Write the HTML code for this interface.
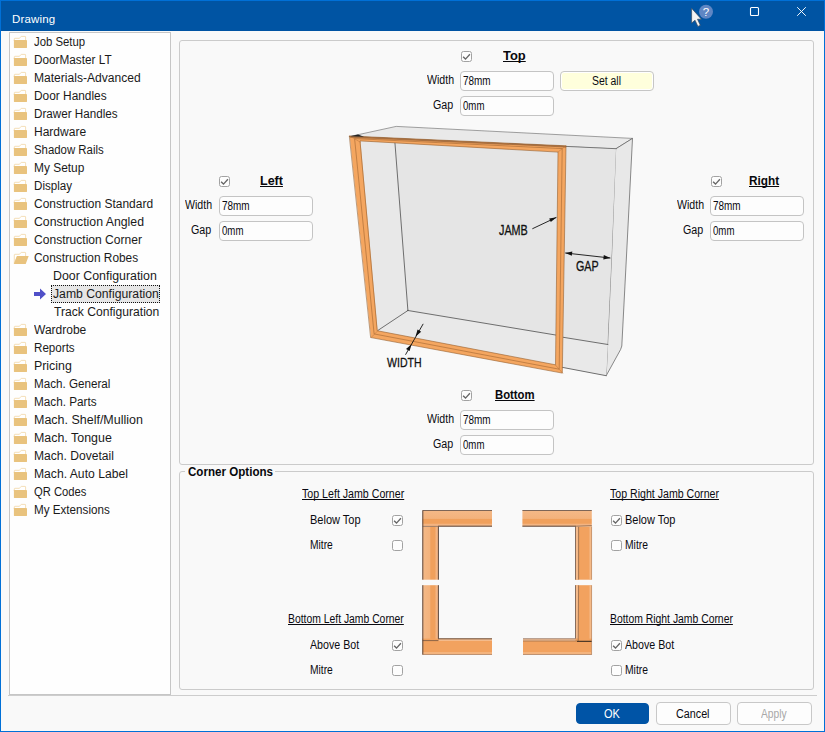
<!DOCTYPE html>
<html><head><meta charset="utf-8"><title>Drawing</title>
<style>
html,body{margin:0;padding:0;}
body{width:825px;height:732px;overflow:hidden;background:#f9f9f9;font-family:"Liberation Sans",sans-serif;font-size:11px;color:#1a1a1a;position:relative;}
.abs{position:absolute;}
#win{position:absolute;left:0;top:0;width:823px;height:730px;border:1px solid #0070d7;background:#f9f9f9;}
#title{position:absolute;left:1px;top:1px;width:823px;height:30px;background:#0054a3;box-sizing:border-box;}
#title .t{position:absolute;left:11px;top:11px;color:#fff;font-size:11.5px;line-height:14px;letter-spacing:.15px;}
#tree{position:absolute;left:9px;top:32px;width:160px;height:661px;border:1px solid #c6c6c6;background:#fefefe;}
.tr{position:absolute;left:0;width:170px;height:18px;}
.tr .fi{position:absolute;left:13px;top:2px;}
.tr .ar{position:absolute;left:33px;top:0px;}
.tt{position:absolute;top:2px;font-size:12px;line-height:14px;white-space:nowrap;color:#1a1a1a;display:inline-block;transform-origin:0 50%;}
.selbox{position:absolute;left:51px;top:0px;width:109px;height:18px;box-sizing:border-box;background:#e6e6e6;border:1px dotted #111;}
.grp{position:absolute;border:1px solid #cbcbcb;border-radius:3px;box-sizing:border-box;}
.lbl{position:absolute;font-size:11px;line-height:13px;white-space:nowrap;color:#1a1a1a;}
.hd{position:absolute;font-size:11px;line-height:13px;font-weight:bold;text-decoration:underline;white-space:nowrap;color:#111;}
.tx{position:absolute;white-space:nowrap;transform-origin:0 50%;color:#0a0a10;display:inline-block;}
.tb{font-weight:bold;color:#08080c;}
.tu{text-decoration:underline;text-decoration-skip-ink:none;text-underline-offset:1px;text-decoration-thickness:1px;}
.tw{color:#fff;}
.tg{color:#a8a8a8;}
.inp{position:absolute;width:94px;height:20px;box-sizing:border-box;border:1px solid #c4c4c4;border-radius:4px;background:#fdfdfd;font-size:11px;line-height:18px;padding-left:3px;color:#1a1a1a;}
.cb{position:absolute;width:11px;height:11px;box-sizing:border-box;border:1px solid #a2a2a2;border-radius:2.5px;background:#fdfdfd;}
.cb svg{position:absolute;left:-1px;top:-1px;}
.btn{position:absolute;height:22px;box-sizing:border-box;border:1px solid #c8c8c8;border-radius:4px;background:#fdfdfd;font-size:11.5px;line-height:20px;text-align:center;color:#1a1a1a;}
</style></head><body>
<div id="win"></div>
<div id="title"><span class="t">Drawing</span>
<svg class="abs" style="left:687px;top:3px" width="28" height="24" viewBox="0 0 28 24">
<circle cx="18" cy="7.7" r="7" fill="#5f86c4"/>
<text x="18" y="11.8" font-size="11.5" text-anchor="middle" fill="#fff" font-family="Liberation Sans">?</text>
<path d="M3.6 4.3 L3.6 19.1 L7 16.2 L9.9 22.4 L12.3 21.3 L9.5 15.2 L13.4 15.2 Z" fill="#f4f4f4" stroke="#3a4a60" stroke-width=".7"/>
</svg>
<svg class="abs" style="left:748px;top:5px" width="12" height="12" viewBox="0 0 12 12"><rect x="1.5" y="1.5" width="8" height="8" rx="1" fill="none" stroke="#fff" stroke-width="1.1"/></svg>
<svg class="abs" style="left:795px;top:5px" width="12" height="12" viewBox="0 0 12 12"><path d="M1.2 1.2 L9.8 9.8 M9.8 1.2 L1.2 9.8" stroke="#fff" stroke-width=".95" fill="none"/></svg>
</div>
<div id="tree"></div>
<div class="tr" style="top:33px"><svg class="fi" width="17" height="15" viewBox="0 0 17 15"><path d="M1.3 6 L1.3 3.8 Q1.3 3.3 1.8 3.3 L6.5 3.3 L7.9 1.6 Q8.1 1.4 8.5 1.4 L12.1 1.4 Q12.6 1.4 12.6 1.9 L12.6 6 Z" fill="#fff" stroke="#f1d7a6" stroke-width=".8"/><rect x="0.9" y="5.1" width="13.1" height="7.8" rx=".4" fill="#e9c37e"/></svg><span class="tt" style="left:33.96px;transform:scaleX(0.946)">Job Setup</span></div>
<div class="tr" style="top:51px"><svg class="fi" width="17" height="15" viewBox="0 0 17 15"><path d="M1.3 6 L1.3 3.8 Q1.3 3.3 1.8 3.3 L6.5 3.3 L7.9 1.6 Q8.1 1.4 8.5 1.4 L12.1 1.4 Q12.6 1.4 12.6 1.9 L12.6 6 Z" fill="#fff" stroke="#f1d7a6" stroke-width=".8"/><rect x="0.9" y="5.1" width="13.1" height="7.8" rx=".4" fill="#e9c37e"/></svg><span class="tt" style="left:33.62px;transform:scaleX(0.981)">DoorMaster LT</span></div>
<div class="tr" style="top:69px"><svg class="fi" width="17" height="15" viewBox="0 0 17 15"><path d="M1.3 6 L1.3 3.8 Q1.3 3.3 1.8 3.3 L6.5 3.3 L7.9 1.6 Q8.1 1.4 8.5 1.4 L12.1 1.4 Q12.6 1.4 12.6 1.9 L12.6 6 Z" fill="#fff" stroke="#f1d7a6" stroke-width=".8"/><rect x="0.9" y="5.1" width="13.1" height="7.8" rx=".4" fill="#e9c37e"/></svg><span class="tt" style="left:33.59px;transform:scaleX(1.006)">Materials-Advanced</span></div>
<div class="tr" style="top:87px"><svg class="fi" width="17" height="15" viewBox="0 0 17 15"><path d="M1.3 6 L1.3 3.8 Q1.3 3.3 1.8 3.3 L6.5 3.3 L7.9 1.6 Q8.1 1.4 8.5 1.4 L12.1 1.4 Q12.6 1.4 12.6 1.9 L12.6 6 Z" fill="#fff" stroke="#f1d7a6" stroke-width=".8"/><rect x="0.9" y="5.1" width="13.1" height="7.8" rx=".4" fill="#e9c37e"/></svg><span class="tt" style="left:33.61px;transform:scaleX(0.990)">Door Handles</span></div>
<div class="tr" style="top:105px"><svg class="fi" width="17" height="15" viewBox="0 0 17 15"><path d="M1.3 6 L1.3 3.8 Q1.3 3.3 1.8 3.3 L6.5 3.3 L7.9 1.6 Q8.1 1.4 8.5 1.4 L12.1 1.4 Q12.6 1.4 12.6 1.9 L12.6 6 Z" fill="#fff" stroke="#f1d7a6" stroke-width=".8"/><rect x="0.9" y="5.1" width="13.1" height="7.8" rx=".4" fill="#e9c37e"/></svg><span class="tt" style="left:33.63px;transform:scaleX(0.971)">Drawer Handles</span></div>
<div class="tr" style="top:123px"><svg class="fi" width="17" height="15" viewBox="0 0 17 15"><path d="M1.3 6 L1.3 3.8 Q1.3 3.3 1.8 3.3 L6.5 3.3 L7.9 1.6 Q8.1 1.4 8.5 1.4 L12.1 1.4 Q12.6 1.4 12.6 1.9 L12.6 6 Z" fill="#fff" stroke="#f1d7a6" stroke-width=".8"/><rect x="0.9" y="5.1" width="13.1" height="7.8" rx=".4" fill="#e9c37e"/></svg><span class="tt" style="left:33.60px;transform:scaleX(1.002)">Hardware</span></div>
<div class="tr" style="top:141px"><svg class="fi" width="17" height="15" viewBox="0 0 17 15"><path d="M1.3 6 L1.3 3.8 Q1.3 3.3 1.8 3.3 L6.5 3.3 L7.9 1.6 Q8.1 1.4 8.5 1.4 L12.1 1.4 Q12.6 1.4 12.6 1.9 L12.6 6 Z" fill="#fff" stroke="#f1d7a6" stroke-width=".8"/><rect x="0.9" y="5.1" width="13.1" height="7.8" rx=".4" fill="#e9c37e"/></svg><span class="tt" style="left:33.73px;transform:scaleX(0.949)">Shadow Rails</span></div>
<div class="tr" style="top:159px"><svg class="fi" width="17" height="15" viewBox="0 0 17 15"><path d="M1.3 6 L1.3 3.8 Q1.3 3.3 1.8 3.3 L6.5 3.3 L7.9 1.6 Q8.1 1.4 8.5 1.4 L12.1 1.4 Q12.6 1.4 12.6 1.9 L12.6 6 Z" fill="#fff" stroke="#f1d7a6" stroke-width=".8"/><rect x="0.9" y="5.1" width="13.1" height="7.8" rx=".4" fill="#e9c37e"/></svg><span class="tt" style="left:33.61px;transform:scaleX(0.993)">My Setup</span></div>
<div class="tr" style="top:177px"><svg class="fi" width="17" height="15" viewBox="0 0 17 15"><path d="M1.3 6 L1.3 3.8 Q1.3 3.3 1.8 3.3 L6.5 3.3 L7.9 1.6 Q8.1 1.4 8.5 1.4 L12.1 1.4 Q12.6 1.4 12.6 1.9 L12.6 6 Z" fill="#fff" stroke="#f1d7a6" stroke-width=".8"/><rect x="0.9" y="5.1" width="13.1" height="7.8" rx=".4" fill="#e9c37e"/></svg><span class="tt" style="left:33.63px;transform:scaleX(0.967)">Display</span></div>
<div class="tr" style="top:195px"><svg class="fi" width="17" height="15" viewBox="0 0 17 15"><path d="M1.3 6 L1.3 3.8 Q1.3 3.3 1.8 3.3 L6.5 3.3 L7.9 1.6 Q8.1 1.4 8.5 1.4 L12.1 1.4 Q12.6 1.4 12.6 1.9 L12.6 6 Z" fill="#fff" stroke="#f1d7a6" stroke-width=".8"/><rect x="0.9" y="5.1" width="13.1" height="7.8" rx=".4" fill="#e9c37e"/></svg><span class="tt" style="left:34.10px;transform:scaleX(0.997)">Construction Standard</span></div>
<div class="tr" style="top:213px"><svg class="fi" width="17" height="15" viewBox="0 0 17 15"><path d="M1.3 6 L1.3 3.8 Q1.3 3.3 1.8 3.3 L6.5 3.3 L7.9 1.6 Q8.1 1.4 8.5 1.4 L12.1 1.4 Q12.6 1.4 12.6 1.9 L12.6 6 Z" fill="#fff" stroke="#f1d7a6" stroke-width=".8"/><rect x="0.9" y="5.1" width="13.1" height="7.8" rx=".4" fill="#e9c37e"/></svg><span class="tt" style="left:34.09px;transform:scaleX(1.024)">Construction Angled</span></div>
<div class="tr" style="top:231px"><svg class="fi" width="17" height="15" viewBox="0 0 17 15"><path d="M1.3 6 L1.3 3.8 Q1.3 3.3 1.8 3.3 L6.5 3.3 L7.9 1.6 Q8.1 1.4 8.5 1.4 L12.1 1.4 Q12.6 1.4 12.6 1.9 L12.6 6 Z" fill="#fff" stroke="#f1d7a6" stroke-width=".8"/><rect x="0.9" y="5.1" width="13.1" height="7.8" rx=".4" fill="#e9c37e"/></svg><span class="tt" style="left:34.10px;transform:scaleX(1.006)">Construction Corner</span></div>
<div class="tr" style="top:249px"><svg class="fi" width="17" height="15" viewBox="0 0 17 15"><path d="M1.3 12.6 L1.3 3.8 Q1.3 3.3 1.8 3.3 L6.5 3.3 L7.9 1.6 Q8.1 1.4 8.5 1.4 L12.1 1.4 Q12.6 1.4 12.6 1.9 L12.6 6 L4 6 Z" fill="#fff" stroke="#f1d7a6" stroke-width=".8"/><path d="M3.9 5.1 L15.7 5.1 L12.7 13 L0.9 13 Z" fill="#e9c37e"/></svg><span class="tt" style="left:34.11px;transform:scaleX(0.988)">Construction Robes</span></div>
<div class="tr" style="top:267px"><span class="tt" style="left:52.77px;transform:scaleX(1.031)">Door Configuration</span></div>
<div class="tr" style="top:285px"><svg class="ar" width="14" height="18" viewBox="0 0 14 18"><path d="M1 7 L7 7 L7 3.4 L13 9 L7 14.6 L7 11 L1 11 Z" fill="#5050c8"/></svg><div class="selbox"></div><span class="tt" style="left:52.65px;transform:scaleX(1.017)">Jamb Configuration</span></div>
<div class="tr" style="top:303px"><span class="tt" style="left:54.05px;transform:scaleX(1.010)">Track Configuration</span></div>
<div class="tr" style="top:321px"><svg class="fi" width="17" height="15" viewBox="0 0 17 15"><path d="M1.3 6 L1.3 3.8 Q1.3 3.3 1.8 3.3 L6.5 3.3 L7.9 1.6 Q8.1 1.4 8.5 1.4 L12.1 1.4 Q12.6 1.4 12.6 1.9 L12.6 6 Z" fill="#fff" stroke="#f1d7a6" stroke-width=".8"/><rect x="0.9" y="5.1" width="13.1" height="7.8" rx=".4" fill="#e9c37e"/></svg><span class="tt" style="left:34.20px;transform:scaleX(1.001)">Wardrobe</span></div>
<div class="tr" style="top:339px"><svg class="fi" width="17" height="15" viewBox="0 0 17 15"><path d="M1.3 6 L1.3 3.8 Q1.3 3.3 1.8 3.3 L6.5 3.3 L7.9 1.6 Q8.1 1.4 8.5 1.4 L12.1 1.4 Q12.6 1.4 12.6 1.9 L12.6 6 Z" fill="#fff" stroke="#f1d7a6" stroke-width=".8"/><rect x="0.9" y="5.1" width="13.1" height="7.8" rx=".4" fill="#e9c37e"/></svg><span class="tt" style="left:33.63px;transform:scaleX(0.968)">Reports</span></div>
<div class="tr" style="top:357px"><svg class="fi" width="17" height="15" viewBox="0 0 17 15"><path d="M1.3 6 L1.3 3.8 Q1.3 3.3 1.8 3.3 L6.5 3.3 L7.9 1.6 Q8.1 1.4 8.5 1.4 L12.1 1.4 Q12.6 1.4 12.6 1.9 L12.6 6 Z" fill="#fff" stroke="#f1d7a6" stroke-width=".8"/><rect x="0.9" y="5.1" width="13.1" height="7.8" rx=".4" fill="#e9c37e"/></svg><span class="tt" style="left:33.57px;transform:scaleX(1.031)">Pricing</span></div>
<div class="tr" style="top:375px"><svg class="fi" width="17" height="15" viewBox="0 0 17 15"><path d="M1.3 6 L1.3 3.8 Q1.3 3.3 1.8 3.3 L6.5 3.3 L7.9 1.6 Q8.1 1.4 8.5 1.4 L12.1 1.4 Q12.6 1.4 12.6 1.9 L12.6 6 Z" fill="#fff" stroke="#f1d7a6" stroke-width=".8"/><rect x="0.9" y="5.1" width="13.1" height="7.8" rx=".4" fill="#e9c37e"/></svg><span class="tt" style="left:33.63px;transform:scaleX(0.971)">Mach. General</span></div>
<div class="tr" style="top:393px"><svg class="fi" width="17" height="15" viewBox="0 0 17 15"><path d="M1.3 6 L1.3 3.8 Q1.3 3.3 1.8 3.3 L6.5 3.3 L7.9 1.6 Q8.1 1.4 8.5 1.4 L12.1 1.4 Q12.6 1.4 12.6 1.9 L12.6 6 Z" fill="#fff" stroke="#f1d7a6" stroke-width=".8"/><rect x="0.9" y="5.1" width="13.1" height="7.8" rx=".4" fill="#e9c37e"/></svg><span class="tt" style="left:33.62px;transform:scaleX(0.979)">Mach. Parts</span></div>
<div class="tr" style="top:411px"><svg class="fi" width="17" height="15" viewBox="0 0 17 15"><path d="M1.3 6 L1.3 3.8 Q1.3 3.3 1.8 3.3 L6.5 3.3 L7.9 1.6 Q8.1 1.4 8.5 1.4 L12.1 1.4 Q12.6 1.4 12.6 1.9 L12.6 6 Z" fill="#fff" stroke="#f1d7a6" stroke-width=".8"/><rect x="0.9" y="5.1" width="13.1" height="7.8" rx=".4" fill="#e9c37e"/></svg><span class="tt" style="left:33.56px;transform:scaleX(1.040)">Mach. Shelf/Mullion</span></div>
<div class="tr" style="top:429px"><svg class="fi" width="17" height="15" viewBox="0 0 17 15"><path d="M1.3 6 L1.3 3.8 Q1.3 3.3 1.8 3.3 L6.5 3.3 L7.9 1.6 Q8.1 1.4 8.5 1.4 L12.1 1.4 Q12.6 1.4 12.6 1.9 L12.6 6 Z" fill="#fff" stroke="#f1d7a6" stroke-width=".8"/><rect x="0.9" y="5.1" width="13.1" height="7.8" rx=".4" fill="#e9c37e"/></svg><span class="tt" style="left:33.57px;transform:scaleX(1.035)">Mach. Tongue</span></div>
<div class="tr" style="top:447px"><svg class="fi" width="17" height="15" viewBox="0 0 17 15"><path d="M1.3 6 L1.3 3.8 Q1.3 3.3 1.8 3.3 L6.5 3.3 L7.9 1.6 Q8.1 1.4 8.5 1.4 L12.1 1.4 Q12.6 1.4 12.6 1.9 L12.6 6 Z" fill="#fff" stroke="#f1d7a6" stroke-width=".8"/><rect x="0.9" y="5.1" width="13.1" height="7.8" rx=".4" fill="#e9c37e"/></svg><span class="tt" style="left:33.59px;transform:scaleX(1.006)">Mach. Dovetail</span></div>
<div class="tr" style="top:465px"><svg class="fi" width="17" height="15" viewBox="0 0 17 15"><path d="M1.3 6 L1.3 3.8 Q1.3 3.3 1.8 3.3 L6.5 3.3 L7.9 1.6 Q8.1 1.4 8.5 1.4 L12.1 1.4 Q12.6 1.4 12.6 1.9 L12.6 6 Z" fill="#fff" stroke="#f1d7a6" stroke-width=".8"/><rect x="0.9" y="5.1" width="13.1" height="7.8" rx=".4" fill="#e9c37e"/></svg><span class="tt" style="left:33.59px;transform:scaleX(1.012)">Mach. Auto Label</span></div>
<div class="tr" style="top:483px"><svg class="fi" width="17" height="15" viewBox="0 0 17 15"><path d="M1.3 6 L1.3 3.8 Q1.3 3.3 1.8 3.3 L6.5 3.3 L7.9 1.6 Q8.1 1.4 8.5 1.4 L12.1 1.4 Q12.6 1.4 12.6 1.9 L12.6 6 Z" fill="#fff" stroke="#f1d7a6" stroke-width=".8"/><rect x="0.9" y="5.1" width="13.1" height="7.8" rx=".4" fill="#e9c37e"/></svg><span class="tt" style="left:33.73px;transform:scaleX(0.936)">QR Codes</span></div>
<div class="tr" style="top:501px"><svg class="fi" width="17" height="15" viewBox="0 0 17 15"><path d="M1.3 6 L1.3 3.8 Q1.3 3.3 1.8 3.3 L6.5 3.3 L7.9 1.6 Q8.1 1.4 8.5 1.4 L12.1 1.4 Q12.6 1.4 12.6 1.9 L12.6 6 Z" fill="#fff" stroke="#f1d7a6" stroke-width=".8"/><rect x="0.9" y="5.1" width="13.1" height="7.8" rx=".4" fill="#e9c37e"/></svg><span class="tt" style="left:33.63px;transform:scaleX(0.971)">My Extensions</span></div>
<div class="grp" style="left:179px;top:40px;width:635px;height:425px"></div>
<div class="grp" style="left:179px;top:471px;width:635px;height:219px"></div>
<div class="abs" style="left:185px;top:466px;width:90px;height:12px;background:#f9f9f9"></div>
<div class="abs" style="left:8px;top:695px;width:809px;height:1px;background:#cdcdcd"></div>
<div class="inp" style="left:460px;top:71px"></div>
<div class="inp" style="left:460px;top:96px"></div>
<div class="inp" style="left:219px;top:196px"></div>
<div class="inp" style="left:219px;top:221px"></div>
<div class="inp" style="left:710px;top:196px"></div>
<div class="inp" style="left:710px;top:221px"></div>
<div class="inp" style="left:460px;top:410px"></div>
<div class="inp" style="left:460px;top:435px"></div>
<div class="btn" style="left:560px;top:71px;width:94px;height:20px;background:#ffffdc;border-color:#c6c6c6;box-shadow:inset 0 0 0 1px #fff"></div>
<div class="btn" style="left:576px;top:703px;width:73px;height:21px;background:#0054a6;border-color:#0054a6"></div>
<div class="btn" style="left:656px;top:702px;width:75px;height:23px"></div>
<div class="btn" style="left:737px;top:702px;width:75px;height:23px"></div>
<div class="cb" style="left:461px;top:51px"><svg width="11" height="11" viewBox="0 0 11 11"><path d="M2.1 5.7 L4.5 8.1 L8.9 3.3" fill="none" stroke="#666" stroke-width="1.35"/></svg></div>
<div class="cb" style="left:219px;top:176px"><svg width="11" height="11" viewBox="0 0 11 11"><path d="M2.1 5.7 L4.5 8.1 L8.9 3.3" fill="none" stroke="#666" stroke-width="1.35"/></svg></div>
<div class="cb" style="left:711px;top:176px"><svg width="11" height="11" viewBox="0 0 11 11"><path d="M2.1 5.7 L4.5 8.1 L8.9 3.3" fill="none" stroke="#666" stroke-width="1.35"/></svg></div>
<div class="cb" style="left:461px;top:390px"><svg width="11" height="11" viewBox="0 0 11 11"><path d="M2.1 5.7 L4.5 8.1 L8.9 3.3" fill="none" stroke="#666" stroke-width="1.35"/></svg></div>
<div class="cb" style="left:392px;top:515px"><svg width="11" height="11" viewBox="0 0 11 11"><path d="M2.1 5.7 L4.5 8.1 L8.9 3.3" fill="none" stroke="#666" stroke-width="1.35"/></svg></div>
<div class="cb" style="left:392px;top:540px"></div>
<div class="cb" style="left:392px;top:640px"><svg width="11" height="11" viewBox="0 0 11 11"><path d="M2.1 5.7 L4.5 8.1 L8.9 3.3" fill="none" stroke="#666" stroke-width="1.35"/></svg></div>
<div class="cb" style="left:392px;top:665px"></div>
<div class="cb" style="left:611px;top:515px"><svg width="11" height="11" viewBox="0 0 11 11"><path d="M2.1 5.7 L4.5 8.1 L8.9 3.3" fill="none" stroke="#666" stroke-width="1.35"/></svg></div>
<div class="cb" style="left:611px;top:540px"></div>
<div class="cb" style="left:611px;top:640px"><svg width="11" height="11" viewBox="0 0 11 11"><path d="M2.1 5.7 L4.5 8.1 L8.9 3.3" fill="none" stroke="#666" stroke-width="1.35"/></svg></div>
<div class="cb" style="left:611px;top:665px"></div>
<span class="tx tb tu" style="left:502.83px;top:48.8px;font-size:12px;line-height:14px;transform:scaleX(1.077)">Top</span>
<span class="tx " style="left:426.50px;top:72.8px;font-size:12px;line-height:14px;transform:scaleX(0.883)">Width</span>
<span class="tx " style="left:433.15px;top:97.8px;font-size:12px;line-height:14px;transform:scaleX(0.892)">Gap</span>
<span class="tx " style="left:463.09px;top:73.8px;font-size:12px;line-height:14px;transform:scaleX(0.828)">78mm</span>
<span class="tx " style="left:463.10px;top:98.8px;font-size:12px;line-height:14px;transform:scaleX(0.804)">0mm</span>
<span class="tx tb tu" style="left:260.32px;top:173.8px;font-size:12px;line-height:14px;transform:scaleX(1.043)">Left</span>
<span class="tx " style="left:184.60px;top:197.8px;font-size:12px;line-height:14px;transform:scaleX(0.883)">Width</span>
<span class="tx " style="left:191.25px;top:222.8px;font-size:12px;line-height:14px;transform:scaleX(0.892)">Gap</span>
<span class="tx " style="left:222.09px;top:198.8px;font-size:12px;line-height:14px;transform:scaleX(0.828)">78mm</span>
<span class="tx " style="left:222.10px;top:223.8px;font-size:12px;line-height:14px;transform:scaleX(0.804)">0mm</span>
<span class="tx tb tu" style="left:748.66px;top:173.8px;font-size:12px;line-height:14px;transform:scaleX(0.982)">Right</span>
<span class="tx " style="left:676.50px;top:197.8px;font-size:12px;line-height:14px;transform:scaleX(0.883)">Width</span>
<span class="tx " style="left:683.15px;top:222.8px;font-size:12px;line-height:14px;transform:scaleX(0.892)">Gap</span>
<span class="tx " style="left:713.09px;top:198.8px;font-size:12px;line-height:14px;transform:scaleX(0.828)">78mm</span>
<span class="tx " style="left:713.10px;top:223.8px;font-size:12px;line-height:14px;transform:scaleX(0.804)">0mm</span>
<span class="tx tb tu" style="left:494.79px;top:387.8px;font-size:12px;line-height:14px;transform:scaleX(0.943)">Bottom</span>
<span class="tx " style="left:426.50px;top:411.8px;font-size:12px;line-height:14px;transform:scaleX(0.883)">Width</span>
<span class="tx " style="left:433.15px;top:436.8px;font-size:12px;line-height:14px;transform:scaleX(0.892)">Gap</span>
<span class="tx " style="left:463.09px;top:412.8px;font-size:12px;line-height:14px;transform:scaleX(0.828)">78mm</span>
<span class="tx " style="left:463.10px;top:437.8px;font-size:12px;line-height:14px;transform:scaleX(0.804)">0mm</span>
<span class="tx " style="left:591.77px;top:74.3px;font-size:12px;line-height:14px;transform:scaleX(0.869)">Set all</span>
<span class="tx tb" style="left:187.52px;top:464.8px;font-size:12px;line-height:14px;transform:scaleX(0.966)">Corner Options</span>
<span class="tx tu" style="left:301.78px;top:486.5px;font-size:12px;line-height:14px;transform:scaleX(0.886)">Top Left Jamb Corner</span>
<span class="tx tu" style="left:288.14px;top:611.5px;font-size:12px;line-height:14px;transform:scaleX(0.864)">Bottom Left Jamb Corner</span>
<span class="tx tu" style="left:609.98px;top:486.5px;font-size:12px;line-height:14px;transform:scaleX(0.883)">Top Right Jamb Corner</span>
<span class="tx tu" style="left:610.43px;top:611.5px;font-size:12px;line-height:14px;transform:scaleX(0.865)">Bottom Right Jamb Corner</span>
<span class="tx " style="left:309.58px;top:512.6px;font-size:12px;line-height:14px;transform:scaleX(0.917)">Below Top</span>
<span class="tx " style="left:309.64px;top:537.6px;font-size:12px;line-height:14px;transform:scaleX(0.855)">Mitre</span>
<span class="tx " style="left:310.20px;top:637.6px;font-size:12px;line-height:14px;transform:scaleX(0.887)">Above Bot</span>
<span class="tx " style="left:309.64px;top:662.6px;font-size:12px;line-height:14px;transform:scaleX(0.855)">Mitre</span>
<span class="tx " style="left:624.58px;top:512.6px;font-size:12px;line-height:14px;transform:scaleX(0.915)">Below Top</span>
<span class="tx " style="left:624.64px;top:537.6px;font-size:12px;line-height:14px;transform:scaleX(0.859)">Mitre</span>
<span class="tx " style="left:625.20px;top:637.6px;font-size:12px;line-height:14px;transform:scaleX(0.890)">Above Bot</span>
<span class="tx " style="left:624.64px;top:662.6px;font-size:12px;line-height:14px;transform:scaleX(0.859)">Mitre</span>
<span class="tx tw" style="left:604.34px;top:707.3px;font-size:12px;line-height:14px;transform:scaleX(0.915)">OK</span>
<span class="tx " style="left:676.05px;top:707.3px;font-size:12px;line-height:14px;transform:scaleX(0.897)">Cancel</span>
<span class="tx tg" style="left:761.00px;top:707.3px;font-size:12px;line-height:14px;transform:scaleX(0.853)">Apply</span>
<svg class="abs" style="left:340px;top:120px" width="310" height="270" viewBox="340 120 310 270">
<g stroke-linejoin="round" stroke-linecap="round">
<!-- top face -->
<polygon points="349.7,136.5 396.2,126.4 632.5,138.4 616,148.7" fill="#e9e9e9" stroke="#6f6f6f" stroke-width=".65"/>
<!-- right side -->
<polygon points="616,148.7 632.5,138.4 626.8,250 621.8,346 620.6,349.5 606.2,375.7 611.8,250" fill="#e8e8e8" stroke="#5a5a5a" stroke-width=".7"/>
<!-- front opening / interior -->
<polygon points="349.7,136.5 616,148.7 611.8,250 606,375.7 372,332" fill="#e5e5e5"/>
<!-- left wall -->
<polygon points="360,142 394.9,142.3 407.9,310.5 377.8,330.5" fill="#e8e8e8"/>
<!-- floor -->
<polygon points="407.9,310.5 607.9,344.5 606.2,375.7 377.8,330.5" fill="#e9e9e9"/>
<g fill="none" stroke="#3a3a3a" stroke-width=".7">
<path d="M394.9 142.3 L407.9 310.5"/>
<path d="M407.9 310.5 L555.6 335"/>
<path d="M563.3 337.3 L607.9 344.5"/>
<path d="M407.9 310.5 L377.8 330.5"/>
<path d="M562 367.3 L606.2 375.7"/>
<path d="M349.7 136.5 L616 148.7" stroke="#555"/>
</g>
<!-- orange frame -->
<path d="M349.7 136 L566 145.8 L562.3 373.1 L371 337.6 Z M360.4 140.9 L558 152.1 L555.5 364.8 L377.6 330.8 Z" fill="#f4a660" fill-rule="evenodd" stroke="#96602f" stroke-width=".6"/>
<path d="M355 138.6 L562.2 148.6 L559.2 369.2 L374.5 334 Z" fill="none" stroke="#a86a34" stroke-width=".65"/>
<path d="M350.6 136.9 L565.6 146.7" fill="none" stroke="#6e4424" stroke-width="1.5" opacity=".55"/>
<path d="M349.7 136 L360.4 142.2 M566 145.8 L558 152 M562.7 373.2 L555.6 365.2 M371 337.6 L378 330.6" stroke="#b8723a" stroke-width=".5" fill="none"/>
<path d="M350 136.2 L358 134.4 L364 136.8" fill="#222" stroke="none"/>
<!-- arrows -->
<g stroke="#111" stroke-width=".9" fill="#111">
<path d="M532.7 228.6 L556 217.6" fill="none"/>
<path d="M556.6 217.3 L549.2 218.6 L550.8 222 Z" stroke="none"/>
<path d="M565.6 253 L610 258" fill="none"/>
<path d="M565.3 252.9 L572.3 251.4 L571.8 255.8 Z" stroke="none"/>
<path d="M610.4 258 L603.8 255.1 L603.3 259.4 Z" stroke="none"/>
<path d="M423 324.2 L405.7 354.4" fill="none"/>
<path d="M415.5 336.6 L417.6 329.6 L421.2 331.7 Z" stroke="none"/>
<path d="M411.5 344.2 L409.6 351.1 L406 349 Z" stroke="none"/>
</g>
<g font-family="Liberation Sans, sans-serif" fill="#111" stroke="#111" stroke-width=".3">
<text x="499" y="235.4" font-size="14" textLength="28.8" lengthAdjust="spacingAndGlyphs">JAMB</text>
<text x="575.9" y="271.3" font-size="14" textLength="22.7" lengthAdjust="spacingAndGlyphs">GAP</text>
<text x="387.1" y="367.2" font-size="13" textLength="34.6" lengthAdjust="spacingAndGlyphs">WIDTH</text>
</g>
</g>
</svg>
<svg class="abs" style="left:415px;top:500px" width="190" height="165" viewBox="415 500 190 165">
<defs>
<linearGradient id="gh" x1="0" y1="0" x2="0" y2="1"><stop offset="0" stop-color="#f4b988"/><stop offset=".5" stop-color="#f3b27c"/><stop offset=".56" stop-color="#f0a05c"/><stop offset=".8" stop-color="#f0a05c"/><stop offset=".86" stop-color="#f3b482"/><stop offset="1" stop-color="#f3b482"/></linearGradient>
<linearGradient id="gv" x1="0" y1="0" x2="1" y2="0"><stop offset="0" stop-color="#f4b988"/><stop offset=".45" stop-color="#f3b27c"/><stop offset=".52" stop-color="#f0a05c"/><stop offset=".78" stop-color="#f0a05c"/><stop offset=".84" stop-color="#f3b482"/><stop offset="1" stop-color="#f3b482"/></linearGradient>
</defs>
<!-- TL -->
<rect x="422.4" y="510.3" width="69.6" height="16.2" fill="url(#gh)"/>
<rect x="422.4" y="526.5" width="16.2" height="53.2" fill="url(#gv)"/>
<rect x="422.4" y="585.2" width="16.2" height="55" fill="url(#gv)"/>
<rect x="422.4" y="638.6" width="69.6" height="16.1" fill="#f2a25f"/>
<rect x="438.6" y="638.6" width="53.4" height="2.4" fill="#f4bb8c"/>
<rect x="422.4" y="652.4" width="69.6" height="1.2" fill="#f5c093"/>
<!-- TR -->
<rect x="522.4" y="510.3" width="69.4" height="16.2" fill="url(#gh)"/>
<rect x="575.2" y="526.5" width="16.6" height="53.2" fill="#f2a25f"/>
<rect x="575.2" y="585.2" width="16.6" height="55" fill="#f2a25f"/>
<rect x="575.2" y="526.5" width="3" height="53.2" fill="#f4bb8c"/>
<rect x="575.2" y="585.2" width="3" height="53.4" fill="#f4bb8c"/>
<rect x="589.6" y="526.5" width="1.2" height="53.2" fill="#f5c093"/>
<rect x="589.6" y="585.2" width="1.2" height="69" fill="#f5c093"/>
<rect x="523" y="638.6" width="68.8" height="16.1" fill="#f2a25f"/>
<rect x="523" y="638.6" width="52.4" height="2.4" fill="#f4bb8c"/>
<rect x="523" y="652.4" width="68" height="1.2" fill="#f5c093"/>
<g stroke="#4a3a34" stroke-width=".9" fill="none">
<path d="M422.6 510.5 L492 510.5" stroke-width=".7"/>
<path d="M438 526.2 L492 526.2"/>
<path d="M422.6 526.4 L438 526.4" stroke-width=".5"/>
<path d="M422.8 510.5 L422.8 579.7 M422.8 585.2 L422.8 654.6"/>
<path d="M438.4 526.5 L438.4 579.7 M438.4 585.2 L438.4 638.6"/>
<path d="M438 638.8 L492 638.8" stroke-width=".8"/>
<path d="M422.6 640.6 L438.4 640.6" stroke-width=".6"/>
<path d="M422.6 654.5 L492 654.5" stroke-width=".5" stroke="#8a6a5a"/>
<path d="M522.4 510.5 L591.8 510.5" stroke-width=".7"/>
<path d="M522.4 526.2 L576 526.2"/>
<path d="M576 526.2 L591.8 525.6" stroke-width=".5"/>
<path d="M575.5 526.5 L575.5 579.7 M575.5 585.2 L575.5 638.6" stroke="#6a5a54" stroke-width=".8"/>
<path d="M578.6 526.8 L578.6 579.7 M578.6 585.2 L578.2 640.8" stroke-width=".45"/>
<path d="M591.6 526.5 L591.6 579.7 M591.6 585.2 L591.6 654.6" stroke-width=".4" stroke="#8a6a5a"/>
<path d="M523 638.8 L575.4 638.8" stroke="#8a8080" stroke-width=".8"/>
<path d="M523 641 L577 641" stroke-width=".4"/>
<path d="M577 641.3 L591.6 641.3" stroke="#111" stroke-width=".9"/>
<path d="M523 654.5 L591.8 654.5" stroke-width=".5" stroke="#8a6a5a"/>
</g>
</svg>

</body></html>
